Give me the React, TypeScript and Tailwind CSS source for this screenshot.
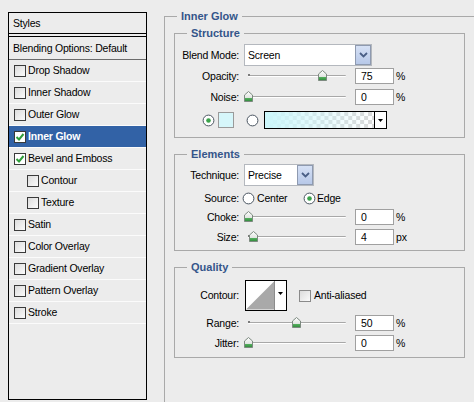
import React from "react";

const STYLES: { label: string; checked?: boolean; active?: boolean; indent?: boolean }[] = [
  { label: "Drop Shadow" },
  { label: "Inner Shadow" },
  { label: "Outer Glow" },
  { label: "Inner Glow", checked: true, active: true },
  { label: "Bevel and Emboss", checked: true },
  { label: "Contour", indent: true },
  { label: "Texture", indent: true },
  { label: "Satin" },
  { label: "Color Overlay" },
  { label: "Gradient Overlay" },
  { label: "Pattern Overlay" },
  { label: "Stroke" },
];

function Check({ checked, light }: { checked?: boolean; light?: boolean }) {
  return (
    <span
      className={`w-[12px] h-[12px] shrink-0 border flex items-center justify-center ${
        light ? "border-[#8a8a8a]" : "border-[#3a3a3a]"
      } ${checked ? "bg-white" : "bg-gradient-to-br from-[#dcdcdc] to-[#fbfbfb]"}`}
    >
      {checked && (
        <svg width="10" height="10" viewBox="0 0 10 10">
          <path d="M1.5 5 L4 7.5 L8.5 2" fill="none" stroke="#2f9e3a" strokeWidth="2" />
        </svg>
      )}
    </span>
  );
}

function Radio({ on }: { on?: boolean }) {
  return (
    <svg width="13" height="13" viewBox="0 0 13 13" className="shrink-0">
      <circle cx="6.5" cy="6.5" r="5.4" fill="#fff" stroke="#4a5561" strokeWidth="1" />
      {on && <circle cx="6.5" cy="6.5" r="2.3" fill="#3aa34a" />}
    </svg>
  );
}

function Thumb() {
  return (
    <svg width="9" height="11" viewBox="0 0 9 11">
      <defs>
        <linearGradient id="tg" x1="0" y1="0" x2="0" y2="1">
          <stop offset="0" stopColor="#ffffff" />
          <stop offset="0.65" stopColor="#dfe3df" />
          <stop offset="0.66" stopColor="#55b05f" />
          <stop offset="1" stopColor="#2f8a3a" />
        </linearGradient>
      </defs>
      <path d="M0.5 4 L4.5 0.5 L8.5 4 L8.5 10.5 L0.5 10.5 Z" fill="url(#tg)" stroke="#7d8a80" strokeWidth="1" />
    </svg>
  );
}

function Label({ children }: { children: React.ReactNode }) {
  return <span className="w-[64px] shrink-0 text-right">{children}</span>;
}

function SliderRow({ label, pos, value, unit }: { label: string; pos: number; value: string; unit: string }) {
  return (
    <div className="flex items-center h-[16px]">
      <Label>{label}</Label>
      <div className="w-[111px] ml-[5px] flex items-center">
        <div className="relative ml-[4px] w-[98px] h-[2px] border-t border-[#a8a8a8] bg-white rounded-full">
          <span className="absolute left-0 -top-[2px] w-[2px] h-[2px] bg-[#7a7a7a]" />
          <span className="absolute -top-[6px]" style={{ left: pos - 248 - 4 }}>
            <Thumb />
          </span>
        </div>
      </div>
      <span className="w-[39px] h-[16px] border border-[#a0a0a0] bg-white pl-[5px] leading-[14px]">{value}</span>
      <span className="ml-[2px]">{unit}</span>
    </div>
  );
}

function Select({ value, width }: { value: string; width: string }) {
  return (
    <div className={`${width} ml-[5px] h-[22px] border border-[#b4b8be] bg-white flex items-stretch`}>
      <span className="flex-1 pl-[3px] flex items-center">{value}</span>
      <span className="w-[16px] border border-[#8e9ab0] bg-gradient-to-b from-[#d6e1f5] to-[#b7c8e8] flex items-center justify-center">
        <svg width="9" height="6" viewBox="0 0 9 6">
          <path d="M1 1 L4.5 4.5 L8 1" fill="none" stroke="#4a5f86" strokeWidth="1.8" />
        </svg>
      </span>
    </div>
  );
}

function Title({ children }: { children: React.ReactNode }) {
  return (
    <span className="self-start -mt-[7px] ml-[12px] px-[4px] h-[13px] leading-[13px] bg-[#ececec] font-bold text-[11px] tracking-normal text-[#34558a]">
      {children}
    </span>
  );
}

function Group({ title, className, children }: { title: string; className: string; children: React.ReactNode }) {
  return (
    <div className={`ml-[9px] w-[291px] border border-[#a9a9a9] flex flex-col ${className}`}>
      <Title>{title}</Title>
      {children}
    </div>
  );
}

export default function App() {
  return (
    <div className="w-[474px] h-[402px] bg-[#ececec] flex overflow-hidden text-[10.5px] tracking-[-0.2px] leading-[13px] text-black font-['Tahoma','Liberation_Sans',sans-serif]">
      {/* Styles list */}
      <div className="mt-[12px] ml-[8px] w-[139px] h-[388px] shrink-0 border border-black flex flex-col">
        <div className="h-[21px] border-b border-black pl-[4px] flex items-center">Styles</div>
        <div className="mt-[2px] h-[24px] border-t border-b border-t-black border-b-[#6b6b6b] pl-[4px] flex items-center">
          Blending Options: Default
        </div>
        {STYLES.map((s) => (
          <div
            key={s.label}
            className={`h-[22px] border-b border-[#fbfbfb] flex items-center ${s.indent ? "pl-[18px]" : "pl-[5px]"} ${
              s.active ? "bg-[#3262a6] text-white font-bold" : ""
            }`}
          >
            <Check checked={s.checked} />
            <span className="ml-[2px]">{s.label}</span>
          </div>
        ))}
      </div>

      {/* Inner Glow */}
      <div className="mt-[16px] ml-[17px] w-[320px] h-[400px] shrink-0 border-l border-t border-[#a9a9a9] flex flex-col">
        <Title>Inner Glow</Title>

        <Group title="Structure" className="mt-[10px] h-[105px]">
          <div className="mt-[4px] flex items-center">
            <Label>Blend Mode:</Label>
            <Select value="Screen" width="w-[128px]" />
          </div>
          <div className="mt-[2px]">
            <SliderRow label="Opacity:" pos={322} value="75" unit="%" />
          </div>
          <div className="mt-[5px]">
            <SliderRow label="Noise:" pos={248} value="0" unit="%" />
          </div>
          <div className="mt-[6px] h-[18px] flex items-center">
            <span className="ml-[27px]">
              <Radio on />
            </span>
            <span className="ml-[3px] w-[16px] h-[16px] border border-[#9a9a9a] bg-[#d6f6fa]" />
            <span className="ml-[12px]">
              <Radio />
            </span>
            <span className="ml-[5px] w-[123px] h-[18px] border border-black bg-white flex">
              <svg width="110" height="16" viewBox="0 0 110 16" className="border-r border-black">
                <defs>
                  <pattern id="chk" width="8" height="8" patternUnits="userSpaceOnUse">
                    <rect width="8" height="8" fill="#ffffff" />
                    <rect width="4" height="4" fill="#d9d9d9" />
                    <rect x="4" y="4" width="4" height="4" fill="#d9d9d9" />
                  </pattern>
                  <linearGradient id="glow" x1="0" y1="0" x2="1" y2="0">
                    <stop offset="0" stopColor="#ccf7fb" stopOpacity="1" />
                    <stop offset="1" stopColor="#ccf7fb" stopOpacity="0" />
                  </linearGradient>
                </defs>
                <rect width="110" height="16" fill="url(#chk)" />
                <rect width="110" height="16" fill="url(#glow)" />
              </svg>
              <span className="flex-1 flex items-center justify-center">
                <svg width="5" height="3" viewBox="0 0 5 3">
                  <path d="M0 0 H5 L2.5 3 Z" fill="#000" />
                </svg>
              </span>
            </span>
          </div>
        </Group>

        <Group title="Elements" className="mt-[16px] h-[97px]">
          <div className="mt-[3px] flex items-center">
            <Label>Technique:</Label>
            <Select value="Precise" width="w-[70px]" />
          </div>
          <div className="mt-[6px] h-[13px] flex items-center">
            <Label>Source:</Label>
            <span className="ml-[3px] w-[61px] flex items-center">
              <Radio />
              <span className="ml-[2px]">Center</span>
            </span>
            <Radio on />
            <span className="ml-[1px]">Edge</span>
          </div>
          <div className="mt-[4px]">
            <SliderRow label="Choke:" pos={248} value="0" unit="%" />
          </div>
          <div className="mt-[4px]">
            <SliderRow label="Size:" pos={253} value="4" unit="px" />
          </div>
        </Group>

        <Group title="Quality" className="mt-[16px] h-[91px]">
          <div className="mt-[6px] h-[31px] flex items-center">
            <Label>Contour:</Label>
            <span className="ml-[6px] w-[42px] h-[31px] border border-black bg-white flex">
              <svg width="29" height="29" viewBox="0 0 29 29" className="border-r border-[#8c8c8c]">
                <rect width="29" height="29" fill="#fff" />
                <path d="M0 29 L29 0 L29 29 Z" fill="#a9a9a9" />
              </svg>
              <span className="flex-1 flex justify-center pt-[11px]">
                <svg width="5" height="3" viewBox="0 0 5 3">
                  <path d="M0 0 H5 L2.5 3 Z" fill="#000" />
                </svg>
              </span>
            </span>
            <span className="ml-[12px]">
              <Check light />
            </span>
            <span className="ml-[3px]">Anti-aliased</span>
          </div>
          <div className="mt-[4px]">
            <SliderRow label="Range:" pos={296} value="50" unit="%" />
          </div>
          <div className="mt-[4px]">
            <SliderRow label="Jitter:" pos={248} value="0" unit="%" />
          </div>
        </Group>
      </div>
    </div>
  );
}
